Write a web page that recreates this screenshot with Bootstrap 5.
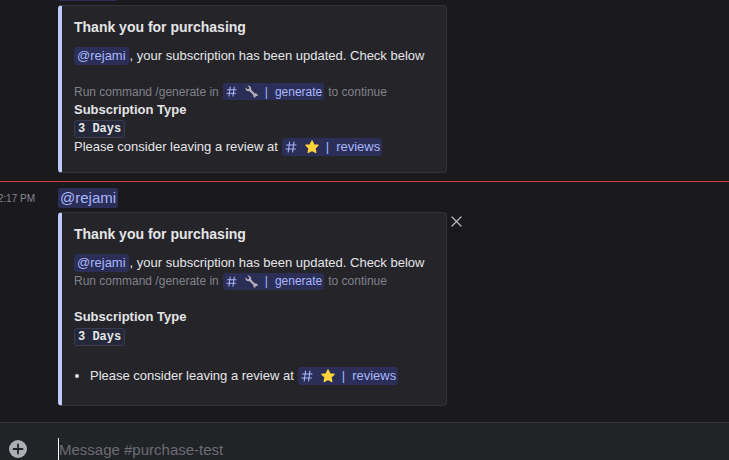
<!DOCTYPE html>
<html lang="en" data-bs-theme="dark">
<head>
<meta charset="utf-8">
<meta name="viewport" content="width=device-width, initial-scale=1">
<title>#purchase-test</title>
<link href="https://cdn.jsdelivr.net/npm/bootstrap@5.3.0/dist/css/bootstrap.min.css" rel="stylesheet">
<style>
  body { background: #1a1a1e; color: #e4e4e7; font: 13px/18px "Liberation Sans", Arial, sans-serif; }
  .history { min-height: 0; }
  .gutter { width: 58px; padding-right: 23px; font-size: 10px; line-height: 22px; color: #84858d; }
  .group-rule { border-top: 1px solid #d8373e; }
  .message { padding-top: 6px; }
  .embed-col { flex: 0 1 389px; }
  .embed {
    padding: 12px 10px 16px 12px;
    background: #242429;
    border: 1px solid #323238; border-left: 4px solid #bfcaff; border-radius: 4px;
  }
  .embed-title { font-size: 14px; line-height: 18px; font-weight: 700; margin-bottom: 11px; color: inherit; }
  .author-line { font-size: 15px; margin-bottom: 4px; }
  .mention, .channel {
    display: inline-block; background: #2b2e57; color: #a9b7fb; border-radius: 3px; padding: 0 2px;
    text-decoration: none;
  }
  .embed .mention { margin-right: 1px; padding: 0 3px; }
  .author-line .mention { display: block; width: fit-content; line-height: 20px; }
  .mention:hover, .channel:hover { background: #5865f2; color: #fff; }
  .channel { display: inline-flex; align-items: center; gap: 8px; height: 18px; padding: 0 2px 0 3px; }
  .channel svg { flex: none; }
  .channel-bar { margin: 0 -1px; }
  .subtext { font-size: 12px; color: #81828a; }
  .subtext .channel { height: 17px; }
  .blank-after { margin-bottom: 18px; }
  .field-name { font-weight: 700; }
  .plan-row { line-height: 19px; }
  .plan {
    display: inline-block; vertical-align: middle; font: 700 12px/16px "Liberation Mono", monospace; color: #e4e4e7;
    background: #25273a; border: 1px solid #3a3b4c; border-radius: 3px; padding: 0 3px;
  }
  .notes { padding-left: 16px; margin: 21px 0 4px; }
  .dismiss { color: #b5b6bd; margin-left: 4px; padding-top: 28px; }
  .composer { background: #222327; border-top: 1px solid #34353a; padding-top: 15px; }
  .attach { width: 58px; padding-left: 9px; }
  .entry {
    background: transparent; color: #e4e4e7; border: 0; border-left: 1px solid #fff;
    padding: 0; height: 22px; font-size: 15px; outline: 0;
  }
  .entry::placeholder { color: #6b6c74; opacity: 1; }
</style>
<script src="https://cdn.jsdelivr.net/npm/bootstrap@5.3.0/dist/js/bootstrap.bundle.min.js"></script>
</head>
<body class="vh-100 overflow-hidden d-flex flex-column">
<svg class="d-none" aria-hidden="true">
  <symbol id="hash" viewBox="0 0 12 12">
    <path d="M4.6 1 3.2 11M9 1 7.6 11M1.6 4h9.4M1 8h9.4" fill="none" stroke="currentColor" stroke-width="1.1" stroke-linecap="round"/>
  </symbol>
  <symbol id="wrench" viewBox="0 0 14 14">
    <path d="M2.6 .6 4.6 2.700 4.200 4.300 2.700 4.700.6 2.600C.1 4.600 1.200 6.500 3.100 6.700c.6.1 1.100 0 1.600-.2l4.200 4.200c-.3 1.500.7 2.700 2.100 3l.5-1.700 1.300-.3.9.6c.4-1.800-.8-3.300-2.500-3.300-.3 0-.5 0-.8.1L6.500 4.900C7.100 3 6 1.100 4.300.7 3.700.5 3.100.5 2.600.6Z" fill="#b9aebb"/>
  </symbol>
  <symbol id="star" viewBox="0 0 14 14">
    <path d="M7 1 8.800 4.900 13 5.300 9.900 8.200 10.800 12.500 7 10.500 3.200 12.500 4.100 8.200 1 5.300 5.200 4.900Z" fill="#ffd43b" stroke="#ffd43b" stroke-width="1.400" stroke-linejoin="round"/>
  </symbol>
</svg>

<main class="history flex-grow-1 d-flex flex-column justify-content-end overflow-hidden">
  <article class="message d-flex flex-shrink-0">
    <div class="gutter flex-shrink-0"></div>
    <div class="embed-col pb-2">
      <div class="author-line"><a class="mention" href="#">@rejami</a></div>
      <section class="embed">
        <h2 class="embed-title">Thank you for purchasing</h2>
        <p class="blank-after"><a class="mention" href="#">@rejami</a>, your subscription has been updated. Check below</p>
        <p class="subtext mb-0 d-flex align-items-center gap-1">Run command /generate in
          <a class="channel" href="#"><svg width="11" height="11" aria-hidden="true"><use href="#hash"/></svg><svg width="13" height="13" aria-hidden="true"><use href="#wrench"/></svg><span class="channel-bar">|</span><span>generate</span></a>
          to continue</p>
        <div class="field-name">Subscription Type</div>
        <div class="plan-row"><code class="plan">3 Days</code></div>
        <p class="mb-0 d-flex align-items-center gap-1">Please consider leaving a review at
          <a class="channel" href="#"><svg width="12" height="12" aria-hidden="true"><use href="#hash"/></svg><svg width="14" height="14" aria-hidden="true"><use href="#star"/></svg><span class="channel-bar">|</span><span>reviews</span></a></p>
      </section>
    </div>
  </article>

  <article class="group-rule message d-flex flex-shrink-0">
    <time class="gutter flex-shrink-0 d-flex justify-content-end text-nowrap">2:17 PM</time>
    <div class="embed-col pb-3">
      <div class="author-line"><a class="mention" href="#">@rejami</a></div>
      <section class="embed">
        <h2 class="embed-title">Thank you for purchasing</h2>
        <p class="mb-0"><a class="mention" href="#">@rejami</a>, your subscription has been updated. Check below</p>
        <p class="subtext blank-after d-flex align-items-center gap-1">Run command /generate in
          <a class="channel" href="#"><svg width="11" height="11" aria-hidden="true"><use href="#hash"/></svg><svg width="13" height="13" aria-hidden="true"><use href="#wrench"/></svg><span class="channel-bar">|</span><span>generate</span></a>
          to continue</p>
        <div class="field-name">Subscription Type</div>
        <div class="plan-row"><code class="plan">3 Days</code></div>
        <ul class="notes">
          <li><span class="d-flex align-items-center gap-1">Please consider leaving a review at
            <a class="channel" href="#"><svg width="12" height="12" aria-hidden="true"><use href="#hash"/></svg><svg width="14" height="14" aria-hidden="true"><use href="#star"/></svg><span class="channel-bar">|</span><span>reviews</span></a></span></li>
        </ul>
      </section>
    </div>
    <button class="dismiss btn border-0 pb-0 px-0 align-self-start lh-1" type="button" aria-label="Remove embed">
      <svg class="d-block" width="11" height="11" viewBox="0 0 11 11" aria-hidden="true"><path d="M1 1l9 9M10 1l-9 9" stroke="currentColor" stroke-width="1.300" stroke-linecap="round"/></svg>
    </button>
  </article>
</main>

<form class="composer d-flex align-items-center flex-shrink-0">
  <div class="attach flex-shrink-0">
    <button class="btn p-0 border-0 d-block" type="button" aria-label="Add attachment">
      <svg class="d-block" width="18" height="18" viewBox="0 0 18 18" aria-hidden="true"><circle cx="9" cy="9" r="9" fill="#aeafb5"/><path d="M9 4.500v9M4.500 9h9" stroke="#222327" stroke-width="1.800" stroke-linecap="round"/></svg>
    </button>
  </div>
  <input class="entry flex-grow-1" type="text" aria-label="Message #purchase-test" placeholder="Message #purchase-test">
</form>
</body>
</html>
